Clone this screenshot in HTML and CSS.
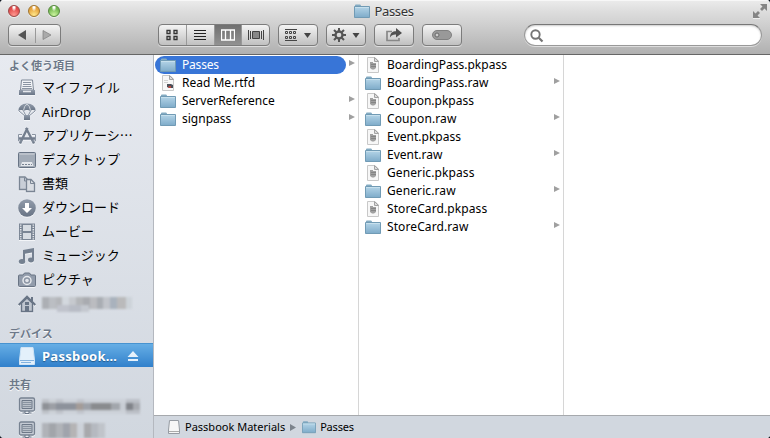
FILE: index.html
```html
<!DOCTYPE html>
<html lang="ja">
<head>
<meta charset="utf-8">
<title>Passes</title>
<link rel="stylesheet" href="styles.css">
</head>
<body>
<svg class="defs" aria-hidden="true">
  <defs>
    <linearGradient id="gf" x1="0" y1="0" x2="0" y2="1"><stop offset="0" stop-color="#b5d5e8"/><stop offset="1" stop-color="#7eabc9"/></linearGradient>
    <linearGradient id="gs" x1="0" y1="0" x2="0" y2="1"><stop offset="0" stop-color="#929cab"/><stop offset="1" stop-color="#687485"/></linearGradient>
    <symbol id="folder" viewBox="0 0 16 16"><path d="M1 4V2.300Q1 1.500 2 1.500H6Q7 1.500 7 3H15V5H1z" fill="#84abc2"/><path d="M.5 3.500H15.500V14.500H.5z" fill="url(#gf)" stroke="#719bb5"/><path d="M1 4.500H15" stroke="#c7e0ed"/></symbol>
    <symbol id="doc" viewBox="0 0 16 16"><path d="M2.500.5H10L13.500 4V15.500H2.500z" fill="#f7f7f7" stroke="#c8c8c8"/><path d="M9.500.5V4.500H13.500z" fill="#ddd" stroke="#a4a4a4"/><path d="M5 5H8V6H11V11L9 12.500H7L5 11z" fill="#a0a0a0"/><path d="M6 7.500H11M6 9.500H11" stroke="#858585"/></symbol>
    <symbol id="rtfd" viewBox="0 0 16 16"><path d="M2.500.5H10L13.500 4V15.500H2.500z" fill="#f8f8f8" stroke="#c8c8c8"/><path d="M9.500.5V4.500H13.500z" fill="#ddd" stroke="#a4a4a4"/><path d="M4 5.500H8M4 7.500H8" stroke="#d4d4d4"/><path d="M7 9H11L13 10V13H9L7 12z" fill="#4b4f58"/><path d="M8.500 11H11V13H8.500z" fill="#bd4840"/></symbol>
  </defs>
</svg>
<div class="window">
  <header class="chrome">
    <div class="titlebar">
      <div class="lights"><i class="light red"></i><i class="light yellow"></i><i class="light green"></i></div>
      <div class="title"><svg width="16" height="16"><use href="#folder"/></svg><span>Passes</span></div>
      <svg class="full" width="16" height="16" viewBox="0 0 16 16"><path d="M8 1H15V8L12.500 5.500 10 8 8 6 10.500 3.500zM1 8L3.500 10.500 6 8 8 10 5.500 12.500 8 15H1z" fill="#858585"/><path d="M1 15.500H8" stroke="#eee"/></svg>
    </div>
    <div class="toolbar">
      <div class="group nav">
        <span class="seg"><svg width="10" height="10"><path d="M9 0V10L1 5z" fill="#555"/></svg></span>
        <span class="seg"><svg width="10" height="10"><path d="M1 .5V9.500L9 5z" fill="#aaa" stroke="#808080" stroke-width=".7"/></svg></span>
      </div>
      <div class="group views">
        <span class="seg"><svg width="12" height="12"><path d="M1 1.500H4V4.500H1zM8 1.500H11V4.500H8zM1 7.500H4V10.500H1zM8 7.500H11V10.500H8z" fill="none" stroke="#333" stroke-width="1.300"/></svg></span>
        <span class="seg"><svg width="12" height="12"><path d="M0 1.500H12M0 4.500H12M0 7.500H12M0 10.500H12" stroke="#222"/></svg></span>
        <span class="seg active"><svg width="14" height="12"><path d="M.5 1H13.500V11H.5zM4.500 1V11M9.500 1V11" fill="none" stroke="#fff" stroke-width="1.300"/></svg></span>
        <span class="seg"><svg width="16" height="12"><path d="M.5 1V11M2.500 2V10M13.500 2V10M15.500 1V11" stroke="#444"/><path d="M4.500 2.500H11.500V9.500H4.500z" fill="#888" stroke="#444"/></svg></span>
      </div>
      <div class="group single arrange"><svg width="28" height="12"><path d="M1 .5H13M1 11.500H13" stroke="#444"/><path d="M1.500 2.500H3.500V4.500H1.500zM5.500 2.500H7.500V4.500H5.500zM9.500 2.500H11.500V4.500H9.500zM1.500 7.500H3.500V9.500H1.500zM5.500 7.500H7.500V9.500H5.500zM9.500 7.500H11.500V9.500H9.500z" fill="none" stroke="#444"/><path d="M20 4H27L23.500 9z" fill="#444"/></svg></div>
      <div class="group single gear"><svg width="28" height="14"><g fill="none" stroke="#555"><circle cx="7" cy="7" r="3.500" stroke-width="2.300"/><path d="M7 0V3M7 11V14M0 7H3M11 7H14M2 2L4.300 4.300M9.700 9.700L12 12M12 2L9.700 4.300M4.300 9.700L2 12" stroke-width="2"/></g><path d="M20.500 5H27.500L24 10z" fill="#444"/></svg></div>
      <div class="group single share"><svg width="18" height="14"><path d="M7 3.500H2V12.500H14V10" fill="none" stroke="#888" stroke-width="1.700"/><path d="M5 9.500C5 5 7.500 3.200 11 3.200V0L17 5 11 9.500V6.500C8.500 6.300 6.500 7 5 9.500z" fill="#505050"/></svg></div>
      <div class="group single tag"><svg width="20" height="10"><rect x=".5" y=".5" width="19" height="9" rx="4.500" fill="#999" stroke="#808080"/><circle cx="5" cy="5" r="2" fill="#ccc" stroke="#6a6a6a"/></svg></div>
      <div class="search"><svg width="14" height="14"><circle cx="5.500" cy="5.500" r="4.200" fill="none" stroke="#747474" stroke-width="1.900"/><path d="M8.700 8.700L12.500 12.500" stroke="#747474" stroke-width="2.200"/></svg></div>
    </div>
  </header>
  <div class="body">
    <aside class="sidebar">
      <h2>よく使う項目</h2>
      <ul>
        <li><svg viewBox="0 0 18 18"><path d="M3.500 1H14.500L15.500 11H2.500z" fill="#f1f3f6" stroke="#7d8796"/><path d="M5 3.500H13M5 5.500H13M4.500 7.500H13.500M4 9.500H14" stroke="#8a94a2"/><path d="M1 11H17V16H1z" fill="url(#gs)"/><path d="M5 12.500H13" stroke="#e5e8ed" stroke-width="1.500"/></svg><span class="ja">マイファイル</span></li>
        <li><svg viewBox="0 0 18 18"><path d="M.3 8Q1 .5 9 .5T17.700 8Q14.500 6 12.500 8 9 6 5.500 8 3.500 6 .3 8z" fill="url(#gs)"/><path d="M5.500 7.500Q6 3 9 1Q12 3 12.500 7.500" fill="none" stroke="#d0d5dc"/><path d="M1 8L7 13M17 8L11 13M5.500 8L8 13M12.500 8L10 13" fill="none" stroke="#8791a0"/><path d="M6 12H12V17H6z" fill="url(#gs)"/></svg><span class="airdrop">AirDrop</span></li>
        <li><svg viewBox="0 0 18 18"><path d="M.5 11.500H17.500M2 16.500L9.500 1M8 1L16 16.500" fill="none" stroke="#737e8e" stroke-width="2.400"/><path d="M4 7.500H.5V14H4M14 7.500H17.500V14H14" fill="none" stroke="#8a94a2"/></svg><span class="ja">アプリケーシ…</span></li>
        <li><svg viewBox="0 0 18 18"><rect x=".5" y="1.500" width="17" height="15" rx="1" fill="#a2abb7" stroke="#687485"/><path d="M1.500 3H16.500" stroke="#d1d5dc"/><path d="M4 11H14L15.500 15H2.500z" fill="#e4e7ec"/><path d="M4 13.500H14" stroke="#7a8594" stroke-dasharray="2 1"/></svg><span class="ja">デスクトップ</span></li>
        <li><svg viewBox="0 0 18 18"><path d="M1.500 2H7L10.500 5.500V14.500H1.500z" fill="#c8ced7" stroke="#7a8594" stroke-width="1.300"/><path d="M6.500 2.500V6H10" fill="none" stroke="#7a8594"/><path d="M8.500 4.500H13L16.500 8V16.500H8.500z" fill="#d9dde3" stroke="#7a8594" stroke-width="1.300"/><path d="M12.500 5V8.500H16" fill="none" stroke="#7a8594"/></svg><span class="ja">書類</span></li>
        <li><svg viewBox="0 0 18 18"><circle cx="9" cy="9" r="8.800" fill="url(#gs)"/><path d="M7 4H11V9H14L9 14 4 9H7z" fill="#fff"/></svg><span class="ja">ダウンロード</span></li>
        <li><svg viewBox="0 0 18 18"><path d="M1 .5H17V17H1z" fill="#7a8594"/><path d="M5 2H13V8H5zM5 10H13V16H5z" fill="#d7dce2"/><path d="M2.700 1.500V17M15.300 1.500V17" stroke="#e4e7ec" stroke-width="1.500" stroke-dasharray="1.300 1"/></svg><span class="ja">ムービー</span></li>
        <li><svg viewBox="0 0 18 18"><path d="M5 3L16 1V13H14V5.500L7 6.700V15H5z" fill="#748090"/><ellipse cx="4" cy="14.500" rx="3.200" ry="2.500" fill="#748090"/><ellipse cx="13" cy="13" rx="3" ry="2.400" fill="#748090"/></svg><span class="ja">ミュージック</span></li>
        <li><svg viewBox="0 0 18 18"><path d="M1.500 4H5L6.500 2H11.500L13 4H16.500Q17.500 4 17.500 5V14.500Q17.500 15.500 16.500 15.500H1.500Q.5 15.500.5 14.500V5Q.5 4 1.500 4z" fill="#929cab" stroke="#697484"/><circle cx="9" cy="9.500" r="4" fill="#8b95a4" stroke="#e6e9ed" stroke-width="1.500"/><circle cx="9" cy="9.500" r="1.800" fill="#e2e5ea"/></svg><span class="ja">ピクチャ</span></li>
        <li><svg viewBox="0 0 18 18"><path d="M3.500 8V16.500H14.500V8L9 3z" fill="#c0c6cf" stroke="#687485" stroke-width="1.400"/><path d="M.7 10L9 1.700 17.300 10M14 2V6" fill="none" stroke="#687485" stroke-width="2"/><path d="M7 7H11V10H7z" fill="#687485"/><path d="M7 11H11V16H7z" fill="#687485"/></svg><span class="blur home"></span></li>
      </ul>
      <h2 class="devices">デバイス</h2>
      <ul>
        <li class="selected"><svg viewBox="0 0 18 18"><path d="M3 .5H15L16.500 13V17.500H1.500V13z" fill="#e3f0fb" stroke="#cee3f5"/><path d="M2 13.500H16M3 15.500H13" stroke="#82b2df"/></svg><span>Passbook…</span><svg class="eject" viewBox="0 0 12 12"><path d="M6 1L11.500 7H.5zM1 9H11V11H1z" fill="#e6f1fb"/></svg></li>
      </ul>
      <h2 class="shared">共有</h2>
      <ul>
        <li><svg viewBox="0 0 18 18"><rect x="1.500" y="1" width="15" height="13" rx="1.500" fill="#c5cbd4" stroke="#778291" stroke-width="1.300"/><path d="M4 3.500H14V11.500H4z" fill="#b9c0c9" stroke="#6d7888"/><path d="M4 5.500H14M4 7.500H14M4 9.500H14" stroke="#8993a0"/><path d="M7 14V16H4.500M11 14V16H13.500M7 16.500H11" stroke="#687485" fill="none"/></svg><span class="blur host"></span></li>
        <li><svg viewBox="0 0 18 18"><rect x="1.500" y="1" width="15" height="13" rx="1.500" fill="#c5cbd4" stroke="#778291" stroke-width="1.300"/><path d="M4 3.500H14V11.500H4z" fill="#b9c0c9" stroke="#6d7888"/><path d="M4 5.500H14M4 7.500H14M4 9.500H14" stroke="#8993a0"/><path d="M7 14V16H4.500M11 14V16H13.500M7 16.500H11" stroke="#687485" fill="none"/></svg><span class="blur short"></span></li>
      </ul>
    </aside>
    <main class="main">
      <div class="columns">
        <div class="column">
          <div class="row on folder"><svg><use href="#folder"/></svg><span class="tight">Passes</span></div>
          <div class="row"><svg><use href="#rtfd"/></svg><span>Read Me.rtfd</span></div>
          <div class="row folder"><svg><use href="#folder"/></svg><span>ServerReference</span></div>
          <div class="row folder"><svg><use href="#folder"/></svg><span>signpass</span></div>
        </div>
        <div class="column">
          <div class="row"><svg><use href="#doc"/></svg><span>BoardingPass.pkpass</span></div>
          <div class="row folder"><svg><use href="#folder"/></svg><span>BoardingPass.raw</span></div>
          <div class="row"><svg><use href="#doc"/></svg><span>Coupon.pkpass</span></div>
          <div class="row folder"><svg><use href="#folder"/></svg><span class="loose">Coupon.raw</span></div>
          <div class="row"><svg><use href="#doc"/></svg><span>Event.pkpass</span></div>
          <div class="row folder"><svg><use href="#folder"/></svg><span>Event.raw</span></div>
          <div class="row"><svg><use href="#doc"/></svg><span class="loose">Generic.pkpass</span></div>
          <div class="row folder"><svg><use href="#folder"/></svg><span class="loose">Generic.raw</span></div>
          <div class="row"><svg><use href="#doc"/></svg><span class="loose">StoreCard.pkpass</span></div>
          <div class="row folder"><svg><use href="#folder"/></svg><span class="loose">StoreCard.raw</span></div>
        </div>
      </div>
      <footer class="pathbar">
        <svg width="12" height="14"><path d="M1.500.5H10.500L11.500 10V13.500H.5V10z" fill="#f7f7f7" stroke="#969ba2"/><path d="M1 11.500H11" stroke="#aaa"/></svg><span class="disk">Passbook Materials</span><svg class="sep" width="6" height="7"><path d="M0 0L6 3.500 0 7z" fill="#7c838c"/></svg><svg width="14" height="14" viewBox="0 0 16 16"><use href="#folder"/></svg><span class="tight">Passes</span>
      </footer>
    </main>
  </div>
</div>
</body>
</html>
```
FILE: styles.css
```css
* { box-sizing: border-box; }
html { background: #111820; }
body { margin: 0; font: 12px/18px "Noto Sans", "Noto Sans CJK JP", sans-serif; color: #000; }
svg { display: block; flex: none; }
.defs { position: absolute; width: 0; height: 0; }
.window { width: 770px; height: 438px; display: flex; flex-direction: column; overflow: hidden; border-radius: 4px; background: #d1d7df; }
.chrome { height: 55px; flex: none; background: linear-gradient(#ececec, #dedede 20%, #b0b0b0); border-bottom: 1px solid #666; box-shadow: inset 0 1px #f7f7f7; }
.titlebar { height: 24px; padding: 0 2px 0 8px; display: grid; grid-template-columns: 1fr auto 1fr; }
.lights { display: flex; gap: 8px; padding-top: 5px; }
.light { width: 12px; height: 12px; border-radius: 50%; border: 1px solid; box-shadow: 0 1px #eee; }
.red { border-color: #9b4747; background: radial-gradient(ellipse at 50% 10%, #fff 0 10%, transparent 35%), radial-gradient(circle at 50% 90%, #ff9a92, #e24b4b 65%); }
.yellow { border-color: #a0752f; background: radial-gradient(ellipse at 50% 10%, #fff 0 10%, transparent 35%), radial-gradient(circle at 50% 90%, #ffe98c, #e6a33d 65%); }
.green { border-color: #56883f; background: radial-gradient(ellipse at 50% 10%, #fff 0 10%, transparent 35%), radial-gradient(circle at 50% 90%, #cdf5a0, #75b951 65%); }
.title { display: flex; gap: 4px; padding-top: 3px; color: #333; font-size: 13px; letter-spacing: -.35px; line-height: 17px; margin-right: 8px; text-shadow: 0 1px #f4f4f4; }
.full { justify-self: end; margin-top: 3px; }
.toolbar { display: flex; padding: 0 8px; }
.group { height: 22px; border: 1px solid #7c7c7c; border-radius: 4px; background: linear-gradient(#f4f4f4, #c0c0c0); display: flex; align-items: center; justify-content: center; box-shadow: 0 1px #dedede; flex: none; overflow: hidden; }
.seg { height: 20px; flex: 1; display: flex; align-items: center; justify-content: center; }
.nav { width: 53px; margin-right: 97px; }
.nav .seg + .seg { position: relative; }
.nav .seg + .seg::before { content: ""; position: absolute; left: 0; top: 3px; width: 1px; height: 15px; background: #999; }
.views { width: 112px; margin-right: 8px; }
.views .seg + .seg { border-left: 1px solid #999; }
.views .active { background: linear-gradient(#707070, #929292); }
.single { width: 40px; margin-right: 8px; }
.tag { margin-right: 62px; }
.search { flex: 1; height: 22px; border: 1px solid #999; border-top-color: #777; border-radius: 11px; background: #fff; padding: 4px 5px; box-shadow: inset 0 1px 2px #ccc, 0 1px #ddd; }
.body { display: flex; flex: 1; min-height: 0; }
.sidebar { width: 154px; flex: none; border-right: 1px solid #b4b8bf; background: linear-gradient(#e7eaf0, #d1d7df); overflow: hidden; }
h2 { margin: 0; padding: 2px 0 0 9px; height: 21px; font-size: 11px; line-height: 18px; color: #6d7989; font-weight: 700; text-shadow: 0 1px #fff; }
h2.devices { margin-top: 7px; height: 20px; }
h2.shared { margin-top: 7px; height: 20px; }
ul { list-style: none; margin: 0; padding: 0; }
li { height: 24px; padding-left: 18px; display: flex; align-items: center; }
li > svg { width: 18px; height: 18px; margin-right: 6px; filter: drop-shadow(0 1px #f3f5f8); }
li span { font-size: 13px; line-height: 20px; white-space: nowrap; }
li .ja { font-family: "Noto Sans CJK JP", sans-serif; margin-top: -2px; }
li .airdrop { letter-spacing: .25px; }
.selected { background: linear-gradient(#66aee5, #3180cb); border-top: 1px solid #4793d0; color: #fff; font-weight: 700; text-shadow: 0 1px 1px #235989; }
.selected svg { filter: none; }
.selected span { width: 78px; letter-spacing: .3px; }
.selected .eject { width: 12px; height: 12px; margin: 0 0 0 7px; }
.blur { filter: blur(.8px); background-repeat: no-repeat; }
.home { width: 90px; height: 15px; margin-top: 1px; background-image: linear-gradient(90deg, #c0c3cc 0 12px, #b8bcc5 12px 24px, #c4c8cf 24px), linear-gradient(90deg, #acafb4 0 7px, #bbbec3 7px 14px, #b4b6ba 14px 20px, #d3d8de 20px 27px, #c6c9ce 27px 34px, #b4b6b9 34px 41px, #a9abb0 41px 48px, #bbbcc0 48px 55px, #a9adb3 55px 61px, #c1c4ca 61px 68px, #a9b2bd 68px 75px, #bababb 75px 84px, #cdd3d9 84px); background-size: 32px 7px, 90px 12px; background-position: 15px 8px, 0 0; }
.host { width: 98px; height: 20px; background-image: linear-gradient(90deg, #8e9196 0 7px, #9c9fa5 7px 14px, #8d929b 14px 34px, #a49c98 34px 41px, #9da1a8 41px 49px, #898b8e 49px 69px, #a2a6ac 69px 78px, #c8cdd4 78px 84px, #808389 84px 91px, #a8abb1 91px), linear-gradient(90deg, #bec2c8 0 7px, #cbd0d6 7px 14px, #bfc3ca 14px 21px, #ccd1d8 21px 35px, #c1c5cc 35px 42px, #ccd1d8 42px 84px, #bcc0c7 84px); background-size: 98px 7px, 98px 15px; background-position: 0 7px, 0 3px; }
.short { width: 63px; height: 15px; background-image: linear-gradient(90deg, #b0b3b8 0 7px, #a2a5aa 7px 14px, #b0b3b8 14px 21px, #a0a4ac 21px 28px, #b5b4b5 28px 35px, #cdd2d9 35px 42px, #a8a9ac 42px 49px, #b5b9c0 49px 56px, #c0c4ca 56px); }
.main { flex: 1; display: flex; flex-direction: column; background: #fff; min-width: 0; }
.columns { flex: 1; display: flex; }
.column { width: 205px; border-right: 1px solid #d6d6d6; padding: 1px 0 0 1px; }
.row { height: 18px; padding-left: 5px; display: flex; align-items: center; gap: 6px; position: relative; width: 191px; border-radius: 9px; }
.row svg { width: 16px; height: 16px; }
.row span { white-space: nowrap; line-height: 18px; }
.loose { letter-spacing: .1px; }
.tight { letter-spacing: -.2px; }
.row.folder::after { content: ""; position: absolute; left: 194px; top: 4px; border-left: 6px solid #a0a0a0; border-top: 3.500px solid transparent; border-bottom: 3.500px solid transparent; }
.row.on { background: #3875d7; color: #fff; }
.pathbar { height: 23px; flex: none; border-top: 1px solid #a6a9ad; background: #d1d7df; padding-left: 14px; display: flex; align-items: center; font-size: 11px; }
.pathbar span { margin-left: 4px; }
.pathbar .disk { margin-left: 5px; }
.pathbar .sep { margin: 0 6px 0 5px; }
```
